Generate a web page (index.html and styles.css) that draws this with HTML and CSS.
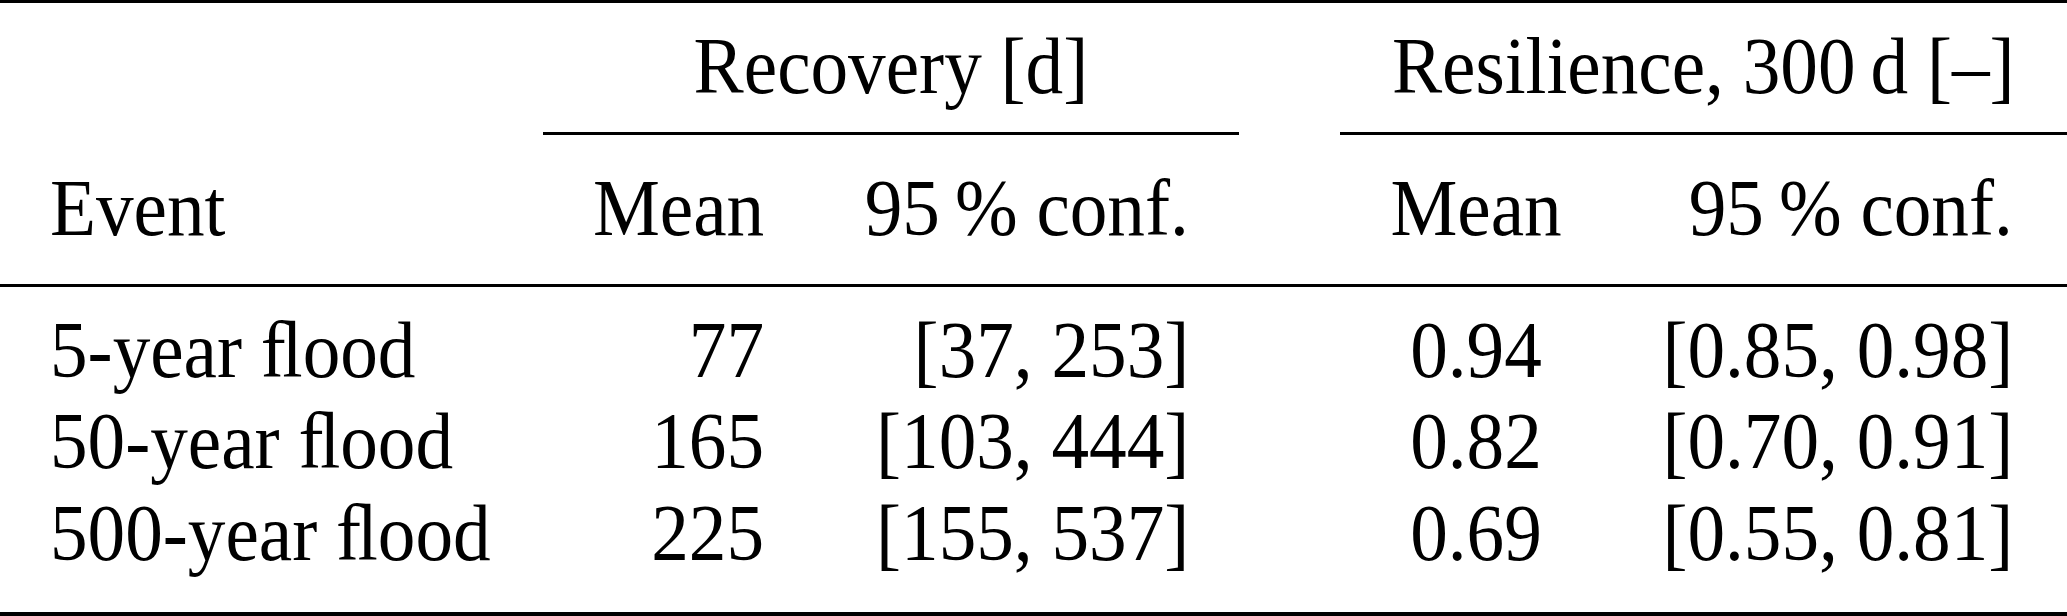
FILE: index.html
```html
<!DOCTYPE html>
<html lang="en">
<head>
<meta charset="utf-8">
<title>Recovery and resilience</title>
<link rel="stylesheet" href="styles.css">
</head>
<body>
<div class="table">
  <div class="cell h1"></div>
  <div class="cell h1 group"><span class="t">Recovery [d]</span></div>
  <div class="cell h1"></div>
  <div class="cell h1 group"><span class="t">Resilience, 300&#8201;d [–]</span></div>

  <div class="cell h2 left"><span class="t">Event</span></div>
  <div class="cell h2 num2"><span class="t">Mean</span></div>
  <div class="cell h2 num3"><span class="t">95&#8201;% conf.</span></div>
  <div class="cell h2"></div>
  <div class="cell h2 mid"><span class="t">Mean</span></div>
  <div class="cell h2 num5"><span class="t">95&#8201;% conf.</span></div>

  <div class="cell r first left"><span class="t">5-year ﬂood</span></div>
  <div class="cell r first num2"><span class="t">77</span></div>
  <div class="cell r first num3"><span class="t">[37, 253]</span></div>
  <div class="cell r first"></div>
  <div class="cell r first mid"><span class="t">0.94</span></div>
  <div class="cell r first num5"><span class="t">[0.85, 0.98]</span></div>

  <div class="cell r left"><span class="t">50-year ﬂood</span></div>
  <div class="cell r num2"><span class="t">165</span></div>
  <div class="cell r num3"><span class="t">[103, 444]</span></div>
  <div class="cell r"></div>
  <div class="cell r mid"><span class="t">0.82</span></div>
  <div class="cell r num5"><span class="t">[0.70, 0.91]</span></div>

  <div class="cell r last left"><span class="t">500-year ﬂood</span></div>
  <div class="cell r last num2"><span class="t">225</span></div>
  <div class="cell r last num3"><span class="t">[155, 537]</span></div>
  <div class="cell r last"></div>
  <div class="cell r last mid"><span class="t">0.69</span></div>
  <div class="cell r last num5"><span class="t">[0.55, 0.81]</span></div>
</div>
</body>
</html>
```

FILE: styles.css
```css
html, body {
  margin: 0;
  padding: 0;
  background: #ffffff;
  overflow: hidden;
}

body {
  width: 2067px;
  height: 616px;
}

.table {
  display: grid;
  grid-template-columns: 543px 269px 427px 101px 272px 455px;
  width: 2067px;
  border-top: 3px solid #000;
  border-bottom: 4px solid #000;
  font-family: "Liberation Serif", "Times New Roman", serif;
  font-size: 80px;
  line-height: 91.5px;
  color: #000;
  white-space: nowrap;
}

.cell {
  box-sizing: border-box;
  overflow: visible;
}

.t {
  display: inline-block;
  transform: scaleX(0.94);
}

.h1 {
  padding-top: 17.6px;
  padding-bottom: 20px;
}

.group {
  grid-column: span 2;
  text-align: center;
  border-bottom: 3px solid #000;
}

.group .t,
.mid .t {
  transform-origin: 50% 50%;
}

.h2 {
  padding-top: 27.6px;
  padding-bottom: 30px;
  border-bottom: 3px solid #000;
}

.r.first {
  padding-top: 17.6px;
}

.r.last {
  padding-bottom: 33px;
}

.left {
  padding-left: 50px;
  text-align: left;
}

.left .t {
  transform-origin: 0 50%;
}

.num2,
.num3,
.num5 {
  text-align: right;
}

.num2 .t,
.num3 .t,
.num5 .t {
  transform-origin: 100% 50%;
}

.num2 {
  padding-right: 48px;
}

.num3 {
  padding-right: 50px;
}

.mid {
  text-align: center;
}

.num5 {
  padding-right: 54px;
}
```
